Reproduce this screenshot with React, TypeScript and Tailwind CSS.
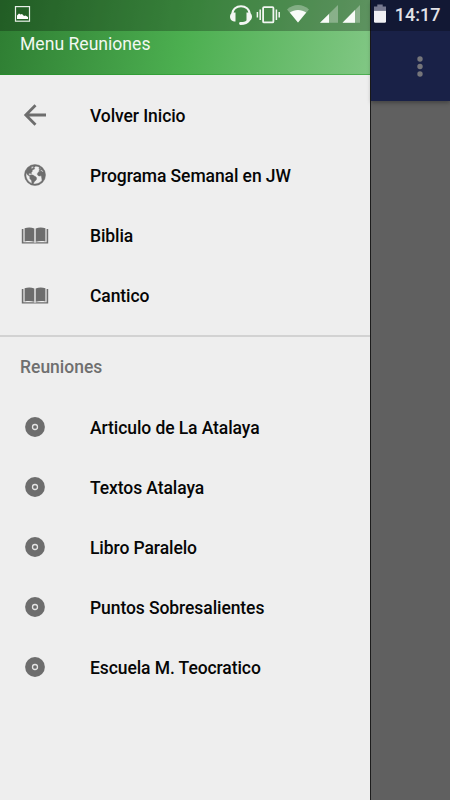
import { IoEarth } from "react-icons/io5";

const mainItems = [
  { label: "Volver Inicio", icon: "back" },
  { label: "Programa Semanal en JW", icon: "globe" },
  { label: "Biblia", icon: "book" },
  { label: "Cantico", icon: "book" },
];

const meetingItems = [
  { label: "Articulo de La Atalaya", icon: "disc" },
  { label: "Textos Atalaya", icon: "disc" },
  { label: "Libro Paralelo", icon: "disc" },
  { label: "Puntos Sobresalientes", icon: "disc" },
  { label: "Escuela M. Teocratico", icon: "disc" },
];

function BackIcon() {
  return (
    <svg width="32" height="32" viewBox="0 0 32 32" fill="none" stroke="#6d6d6d" strokeWidth="2.8">
      <path d="M27 16H7.5M16.5 6.3L6.8 16L16.5 25.700" />
    </svg>
  );
}

function BookIcon() {
  return (
    <svg width="28" height="18" viewBox="0 0 28 18" className="relative top-px" fill="#6d6d6d">
      <path d="M3.6 1.2C7 .1 10.2 .2 13.3 1.4V14.8C10.2 13.8 7 13.7 3.6 14.4Z" />
      <path d="M24.4 1.2C21 .1 17.8 .2 14.7 1.4V14.8C17.8 13.8 21 13.7 24.4 14.4Z" />
      <path d="M.8 2H2.4V15.3H12.5L14 15.7L15.5 15.3H25.6V2H27.2V16.6H.8Z" />
    </svg>
  );
}

function DiscIcon() {
  return (
    <svg width="20" height="20" viewBox="0 0 20 20">
      <circle cx="10" cy="10" r="9.9" fill="#6d6d6d" />
      <circle cx="10" cy="10" r="2.5" fill="none" stroke="#e4e4e4" strokeWidth="1.3" />
    </svg>
  );
}

function ItemIcon({ name }: { name: string }) {
  switch (name) {
    case "back":
      return <BackIcon />;
    case "globe":
      return <IoEarth size={24} strokeWidth={10} />;
    case "book":
      return <BookIcon />;
    default:
      return <DiscIcon />;
  }
}

function MenuItem({ label, icon }: { label: string; icon: string }) {
  return (
    <li className="flex h-[60px] items-center">
      <span className="ml-[19px] flex w-8 shrink-0 items-center justify-center text-[#6d6d6d]">
        <ItemIcon name={icon} />
      </span>
      <span className="ml-[39px] pt-px text-[17.5px] leading-5 font-medium tracking-[-0.08px] text-[#060606]">
        {label}
      </span>
    </li>
  );
}

function StatusBar() {
  return (
    <div className="absolute inset-x-0 top-0 h-[31px] bg-black/26">
      <svg className="h-[31px] w-full" viewBox="0 0 450 31">
        {/* picture notification */}
        <rect x="15.5" y="6.6" width="14" height="14.6" fill="none" stroke="#e8efe8" strokeWidth="1.2" />
        <path d="M17 19V15.5L19 13.5L20.5 14.5L22 14L24 16L25.5 15.5L28 17V19Z" fill="#fff" />
        {/* headset */}
        <path d="M232.3 16V14.5C232.3 3.5 249.7 3.5 249.7 14.5V16" fill="none" stroke="#f2f6f2" strokeWidth="2" />
        <path d="M230 16.5C230 14 232 12.4 235.5 12.6V21.5C232 21.5 230 19.5 230 16.5ZM252 16.5C252 14 250 12.4 246.5 12.6V21.5C250 21.5 252 19.5 252 16.5Z" fill="#f2f6f2" />
        <path d="M248.5 20.5C247 23 245 23.5 240.5 23.5" fill="none" stroke="#f2f6f2" strokeWidth="2.8" strokeLinecap="round" />
        {/* vibrate */}
        <rect x="263.1" y="7.1" width="10.3" height="15.3" rx="1" fill="none" stroke="#f2f6f2" strokeWidth="1.8" />
        <path d="M260.2 9.5V20M257.4 12V17.5M276.4 9.5V20M279.2 12V17.5" stroke="#f2f6f2" strokeWidth="1.5" />
        {/* wifi */}
        <path d="M287 9.5C293 3.5 303 3.5 309 9.5L298 22.5Z" fill="#fff" opacity=".3" />
        <path d="M289.8 12.5C294.5 9 301.5 9 306.2 12.5L298 22.5Z" fill="#f8fbf8" />
        {/* signal */}
        <path d="M320 22.8L338 5V22.8ZM342.5 22.8L360 5V22.8Z" fill="#fff" opacity=".3" />
        <path d="M320 22.8L329 14V22.8ZM342.5 22.8L355 10V22.8Z" fill="#f8fbf8" />
        {/* battery */}
        <path d="M374 10.8V6.5H377.3V4.5H382.7V6.5H386V10.8Z" fill="#77798f" />
        <path d="M374 10.8H386V21.5Q386 22.8 384.7 22.8H375.3Q374 22.8 374 21.5Z" fill="#f1f1f4" />
      </svg>
      <span className="absolute top-[3px] right-[9.5px] text-[18px] leading-6 font-medium text-[#e2e2e7]">
        14:17
      </span>
    </div>
  );
}

function App() {
  return (
    <div className="relative flex h-[800px] w-[450px] overflow-hidden bg-[#606060] font-['Roboto','Noto_Sans',sans-serif]">
      <aside className="w-[370px] shrink-0 bg-[#eeeeee]">
        <header className="h-[75px] border-b border-[#1f9a25]/50 bg-[linear-gradient(101.5deg,#2e7d32_0%,#4caf50_50%,#81c784_100%)] pt-[34px] pl-5">
          <h1 className="text-[17.6px] leading-5 text-[#f1f8f1]">Menu Reuniones</h1>
        </header>
        <ul className="pt-[10px]">
          {mainItems.map((item) => (
            <MenuItem key={item.label} {...item} />
          ))}
        </ul>
        <div className="mt-[10px] h-[2px] bg-[#d2d2d2]" />
        <h2 className="flex h-[60px] items-center pt-px pl-5 text-[17.5px] font-medium text-[#6f6f6f]">
          Reuniones
        </h2>
        <ul>
          {meetingItems.map((item) => (
            <MenuItem key={item.label} {...item} />
          ))}
        </ul>
      </aside>
      <main className="flex-1 border-l border-black/70">
        <div className="flex h-[101px] items-start justify-end bg-[#192147] pt-[56px] pr-[27px] shadow-[0_2px_4px_rgba(0,0,0,0.3)]">
          <svg width="6" height="21" viewBox="0 0 6 21" fill="#75757a">
            <circle cx="3" cy="3" r="2.7" />
            <circle cx="3" cy="10.5" r="2.7" />
            <circle cx="3" cy="18" r="2.7" />
          </svg>
        </div>
      </main>
      <StatusBar />
    </div>
  );
}

export default App;
